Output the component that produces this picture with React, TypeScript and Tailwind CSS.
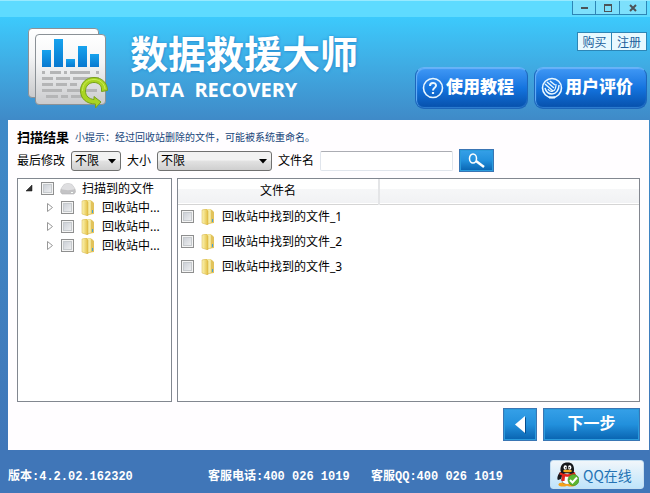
import type { ReactNode } from "react";

const treeItems = ["回收站中...", "回收站中...", "回收站中..."];
const files = ["回收站中找到的文件_1", "回收站中找到的文件_2", "回收站中找到的文件_3"];

function ReportLogo() {
  return (
    <svg width="82" height="84" viewBox="0 0 82 84" aria-hidden="true">
      <defs>
        <linearGradient id="paper" x1="0" y1="0" x2="0" y2="1">
          <stop offset="0" stopColor="#ffffff" />
          <stop offset="0.4" stopColor="#f4f5f6" />
          <stop offset="1" stopColor="#c9cacc" />
        </linearGradient>
        <linearGradient id="bar" x1="0" y1="0" x2="0" y2="1">
          <stop offset="0" stopColor="#17a3ee" />
          <stop offset="1" stopColor="#0878cf" />
        </linearGradient>
      </defs>
      <rect x="0.5" y="1.5" width="70" height="69" rx="3.5" fill="url(#paper)" stroke="#8b9196" />
      <rect x="7.5" y="7.5" width="70" height="70" rx="3.5" fill="url(#paper)" stroke="#8b9196" />
      <g fill="url(#bar)">
        <rect x="14" y="23" width="9" height="17" />
        <rect x="26" y="12" width="9" height="28" />
        <rect x="38" y="32" width="9" height="8" />
        <rect x="50" y="19" width="9" height="21" />
        <rect x="62" y="27" width="9" height="13" />
      </g>
      <path
        d="M14 45.500h3M22 45.500h11M36 45.500h3M42 45.500h20M68 45.500h3M14 51.500h11M28 51.500h14M45 51.500h26M14 57.500h11M28 57.500h11M42 57.500h7M14 63.500h20M39 63.500h13M58 63.500h11M18 69.500h12M33 69.500h7M43 69.500h14"
        stroke="#b4b5b6"
        strokeWidth="3"
        fill="none"
      />
      <path
        d="M79.500 63.500C79.500 56 74 50.500 66 50.500C58 50.500 52.500 56 52.500 64C52.500 71 58 77 67.500 77V81L73 75L66 69.500V72.500C61 72 57.500 69 57.500 64C57.500 59 61 55.500 66 55.500C70.500 55.500 73.500 58.500 73.500 62V64.500Z"
        fill="#a9d422"
        stroke="#76a01c"
        strokeLinejoin="round"
      />
      <path d="M54.500 64C54.500 57 59 52.500 66 52.500C72 52.500 76.500 56.500 77 62" stroke="#c9ec58" fill="none" />
    </svg>
  );
}

function Folder() {
  return (
    <svg width="14" height="16" viewBox="0 0 14 16" className="shrink-0" aria-hidden="true">
      <defs>
        <linearGradient id="folder" x1="0" y1="0" x2="1" y2="0">
          <stop offset="0" stopColor="#fcf5b4" />
          <stop offset="1" stopColor="#e3bf43" />
        </linearGradient>
      </defs>
      <path d="M5 1H11L13 3V14L6 15Z" fill="#e2c25a" />
      <path d="M4 0H10V14L5 15Z" fill="#f7eda5" stroke="#dfc464" strokeWidth="0.5" />
      <path d="M1 1L5 0L7 2V16L1 14Z" fill="url(#folder)" stroke="#d5b344" strokeWidth="0.5" />
      <path d="M11.500 10V13" stroke="#3fa0dd" />
    </svg>
  );
}

function Drive() {
  return (
    <svg width="16" height="12" viewBox="0 0 16 12" className="shrink-0" aria-hidden="true">
      <path d="M4 1.500C6 0.500 10 0.500 12 1.500L15 6L15.500 9L14 11H2L0.500 9L1 6Z" fill="#c3c3c5" stroke="#b4b4b6" strokeWidth="0.6" />
      <path d="M4 1.500C6 0.500 10 0.500 12 1.500L15 6C11 7.500 5 7.500 1 6Z" fill="#dedee0" />
      <path d="M11 9.500h2" stroke="#f9fff9" />
    </svg>
  );
}

function Penguin() {
  return (
    <svg width="22" height="25" viewBox="0 0 22 25" className="shrink-0" aria-hidden="true">
      <ellipse cx="6" cy="22.500" rx="4.500" ry="2" fill="#f3a11b" />
      <ellipse cx="14" cy="22.500" rx="4.500" ry="2" fill="#f3a11b" />
      <path d="M3 10C0 14 0 17 1 18L4 17C5 21 7 22 10 22S16 21 17 17L19 18C20 16 19 13 17 10Z" fill="#17181c" />
      <ellipse cx="10" cy="16.500" rx="5.500" ry="5.500" fill="#ffffff" />
      <path d="M3.500 9C3 3 6 0.500 10.500 0.500S17.500 3 17 9C17 12 4 12 3.500 9Z" fill="#17181c" />
      <ellipse cx="8.300" cy="5.500" rx="1.700" ry="2.300" fill="#ffffff" />
      <ellipse cx="12.700" cy="5.500" rx="1.700" ry="2.300" fill="#ffffff" />
      <circle cx="8.800" cy="5.700" r="0.700" fill="#111111" />
      <circle cx="12.200" cy="5.700" r="0.700" fill="#111111" />
      <ellipse cx="10.500" cy="9" rx="4.500" ry="1.300" fill="#f6ac1d" />
      <path d="M3 10C7 13 14 13 18 10L18.500 13C15 15 10 15 8 14.500L7.500 19H4.500L5 13.500L2.500 12.500Z" fill="#e1261c" />
      <circle cx="16.500" cy="18" r="5.500" fill="#5cb531" stroke="#3f8d22" strokeWidth="0.600" />
      <path d="M13 18L15.500 20.500L20 15.500" fill="none" stroke="#ffffff" strokeWidth="2" />
    </svg>
  );
}

function QuestionIcon() {
  return (
    <svg width="22" height="22" viewBox="0 0 22 22" fill="none" stroke="#e9f7ff" aria-hidden="true">
      <circle cx="11" cy="11" r="9.500" strokeWidth="1.600" />
      <path d="M8 9C8 5 14 5 14 8.500C14 11 11 10.500 11 13.500" strokeWidth="2" />
      <path d="M11 15v2" strokeWidth="2.200" />
    </svg>
  );
}

function ReviewIcon() {
  return (
    <svg width="22" height="22" viewBox="0 0 22 22" fill="none" stroke="#e9f7ff" aria-hidden="true">
      <circle cx="11" cy="11" r="9.500" strokeWidth="1.600" />
      <path d="M4 7L12 14M6 5L13 11M9 4L14 8" strokeWidth="1.500" />
      <path d="M4 11C5 15 8 17 11 17C15 17 18 13 18 8" strokeWidth="1.500" />
      <path d="M7 12C8 14 10 15 12 14C15 13 15 10 15 7" strokeWidth="1.200" />
      <path d="M8 20.500h6" strokeWidth="2" />
    </svg>
  );
}

function Check({ label }: { label: string }) {
  return (
    <input
      type="checkbox"
      aria-label={label}
      className="size-[13px] shrink-0 appearance-none border border-[#8e8f8f] bg-linear-to-br from-[#c3c8d0] to-[#f6f6f6] shadow-[inset_0_0_0_1px_#f4f4f4,inset_0_0_0_2px_#c6cacd] checked:from-[#2f6db5]"
    />
  );
}

function Dropdown({ id, className }: { id: string; className: string }) {
  return (
    <div className={"relative " + className}>
      <select
        id={id}
        className="block h-5 w-full appearance-none rounded-[3px] border border-[#707070] bg-linear-to-b from-[#f2f2f2] from-45% via-[#e2e2e2] via-50% to-[#cfcfcf] pl-[3px] text-xs leading-[18px] text-black"
      >
        <option>不限</option>
      </select>
      <svg width="8" height="5" viewBox="0 0 8 5" className="pointer-events-none absolute top-2 right-[5px]">
        <path d="M0 0H8L4 4.500Z" fill="#000000" />
      </svg>
    </div>
  );
}

function HeaderButton({ icon, children }: { icon: ReactNode; children: ReactNode }) {
  return (
    <button className="flex h-[42px] w-[113px] items-center gap-[2px] rounded-[9px] border border-[#1d66bb] border-t-[#68b4f6] bg-linear-to-b from-[#3f98f5] via-[#1474df] via-50% to-[#0750ab] pl-[6px] text-[17px] leading-5 font-black whitespace-nowrap text-white shadow-[inset_1px_1px_1px_#6ab2fa,inset_0_-1px_1px_#2f7fd2]">
      {icon}
      <span className="pb-1">{children}</span>
    </button>
  );
}

const blueButton =
  "flex items-center justify-center border border-[#3a75b4] bg-linear-to-b from-[#35a0e8] from-0% via-[#2290dc] via-50% to-[#0863b0] to-100% text-white shadow-[inset_0_0_0_1px_#2b9bdc]";

export default function App() {
  return (
    <div className="flex min-h-screen flex-col bg-[#4076b8] bg-linear-to-b from-[#3ccafc] from-[17px] via-[#3f8ac8] via-[120px] to-[#4076b8] to-[450px] font-['Noto_Sans','Noto_Sans_CJK_SC',sans-serif] text-xs text-black">
      <div className="flex h-[17px] items-start justify-end border-t border-[#97eaff] bg-[#5edbff] pr-[3px]">
        <div className="flex h-[14px] divide-x divide-[#2d86b6] border border-t-0 border-[#2d86b6] bg-[#7de0fc]">
          <button aria-label="最小化" className="flex w-[23px] items-center justify-center">
            <span className="h-[2px] w-[7px] bg-[#4c5358]" />
          </button>
          <button aria-label="最大化" className="flex w-[24px] items-center justify-center">
            <span className="size-2 border border-t-2 border-[#4c5358]" />
          </button>
          <button aria-label="关闭" className="flex w-[26px] items-center justify-center">
            <svg width="8" height="8" viewBox="0 0 8 8" stroke="#4c5358" strokeWidth="2">
              <path d="M1 1L7 7M7 1L1 7" />
            </svg>
          </button>
        </div>
      </div>

      <header className="flex h-[103px] justify-between pr-[3px] pl-7">
        <div className="flex gap-5">
          <div className="pt-[10px]">
            <ReportLogo />
          </div>
          <div className="pt-4 font-bold whitespace-nowrap text-white">
            <h1 className="font-['Liberation_Sans','Noto_Sans_CJK_SC',sans-serif] text-[38px] leading-[45px] [text-shadow:0_0_3px_#258bcf,1px_1px_2px_#3a9ddb]">
              数据救援大师
            </h1>
            <p className="font-['Open_Sans','Noto_Sans',sans-serif] text-xl leading-6 whitespace-pre">DATA  RECOVERY</p>
          </div>
        </div>
        <div className="flex flex-col items-end pt-[15px] font-['Noto_Sans_CJK_SC',sans-serif]">
          <div className="flex divide-x divide-[#2d86b6] border border-[#2d86b6] bg-[#e8f9ff] leading-[17px] text-[#1c5f9c]">
            <button className="w-[34px]">购买</button>
            <button className="w-[34px]">注册</button>
          </div>
          <div className="flex gap-[6px] pt-4">
            <HeaderButton icon={<QuestionIcon />}>使用教程</HeaderButton>
            <HeaderButton icon={<ReviewIcon />}>用户评价</HeaderButton>
          </div>
        </div>
      </header>

      <main className="mr-px ml-2 flex flex-1 flex-col bg-[#fffdff] px-[9px] pt-2 pb-[9px]">
        <div className="flex h-[18px] items-center gap-[6px]">
          <h2 className="text-[13px] leading-[18px] font-bold">扫描结果</h2>
          <p className="font-['Noto_Sans_CJK_SC',sans-serif] text-[10px] leading-[18px] text-[#17457a]">
            小提示：经过回收站删除的文件，可能被系统重命名。
          </p>
        </div>
        <div className="flex h-[26px] items-center pt-[3px]">
          <label htmlFor="modified" className="pr-[6px]">最后修改</label>
          <Dropdown id="modified" className="w-[50px]" />
          <label htmlFor="size" className="pr-[6px] pl-[6px]">大小</label>
          <Dropdown id="size" className="w-[115px]" />
          <label htmlFor="filename" className="pr-[6px] pl-[6px]">文件名</label>
          <input
            id="filename"
            className="h-5 w-[133px] rounded-[2px] border border-[#e0e5ec] border-t-[#abadb3] bg-white px-1 outline-none"
          />
          <button aria-label="搜索" className={blueButton + " ml-[6px] h-[23px] w-[35px]"}>
            <svg width="17" height="16" viewBox="0 0 17 16" fill="none" stroke="#ffffff">
              <ellipse cx="5" cy="5.500" rx="3.500" ry="4.500" strokeWidth="1.500" />
              <path d="M8 8L16 14" strokeWidth="2.500" />
            </svg>
          </button>
        </div>

        <div className="flex flex-1 gap-[5px] pt-[6px]">
          <aside className="w-[155px] shrink-0 border border-[#828790] bg-white">
            <div className="flex h-[19px] items-center pl-2">
              <svg width="7" height="7" viewBox="0 0 7 7">
                <path d="M6 0V6H0Z" fill="#333333" stroke="#111111" strokeWidth="0.500" />
              </svg>
              <div className="flex items-center gap-[6px] pl-2">
                <Check label="扫描到的文件" />
                <Drive />
                <span>扫描到的文件</span>
              </div>
            </div>
            {treeItems.map((item, i) => (
              <div key={i} className="flex h-[19px] items-center pl-[29px]">
                <svg width="6" height="9" viewBox="0 0 6 9">
                  <path d="M0.500 0.500L5.500 4.500L0.500 8.500Z" fill="#ffffff" stroke="#989898" />
                </svg>
                <div className="flex items-center gap-[7px] pl-2">
                  <Check label={item} />
                  <Folder />
                  <span className="whitespace-nowrap">{item}</span>
                </div>
              </div>
            ))}
          </aside>

          <section className="min-w-0 flex-1 border border-[#828790] bg-white">
            <table className="w-full table-fixed border-collapse">
              <thead>
                <tr className="h-[25px] border-b border-[#d5d5d5] bg-linear-to-b from-white from-40% via-[#f6f7f8] via-40% to-[#f1f2f4]">
                  <th className="w-[201px] border-r-2 border-[#e4e5e7] p-0 font-normal">文件名</th>
                  <th className="p-0" />
                </tr>
              </thead>
              <tbody>
                {files.map((file) => (
                  <tr key={file} className="h-[25px]">
                    <td colSpan={2} className="p-0 pl-[3px]">
                      <div className="flex items-center gap-[7px]">
                        <Check label={file} />
                        <Folder />
                        <span>{file}</span>
                      </div>
                    </td>
                  </tr>
                ))}
              </tbody>
            </table>
          </section>
        </div>

        <div className="flex justify-end gap-[6px] pt-[6px]">
          <button aria-label="上一步" className={blueButton + " h-[33px] w-[34px]"}>
            <svg width="11" height="18" viewBox="0 0 11 18">
              <path d="M11 1V18L2 9Z" fill="#064c8c" />
              <path d="M10 0V17L0 8.500Z" fill="#ffffff" />
            </svg>
          </button>
          <button className={blueButton + " h-[33px] w-[97px] pb-1 text-base leading-6 font-bold"}>下一步</button>
        </div>
      </main>

      <footer className="flex h-[43px] items-center pt-[6px] pr-[6px] pl-2 font-['Liberation_Mono','Noto_Sans_CJK_SC',monospace] font-bold whitespace-nowrap text-white">
        <span className="w-[200px] pt-1">版本:4.2.02.162320</span>
        <span className="w-[163px] pt-1">客服电话:400 026 1019</span>
        <span className="pt-1">客服QQ:400 026 1019</span>
        <button className="ml-auto flex h-[29px] w-[94px] items-center gap-1 rounded-[3px] border border-[#c5dff2] bg-linear-to-b from-[#f1f6fa] to-[#bfe4fb] pl-[6px] font-['Noto_Sans_CJK_SC',sans-serif] text-sm font-normal text-[#2473b4]">
          <Penguin />
          QQ在线
        </button>
      </footer>
    </div>
  );
}
